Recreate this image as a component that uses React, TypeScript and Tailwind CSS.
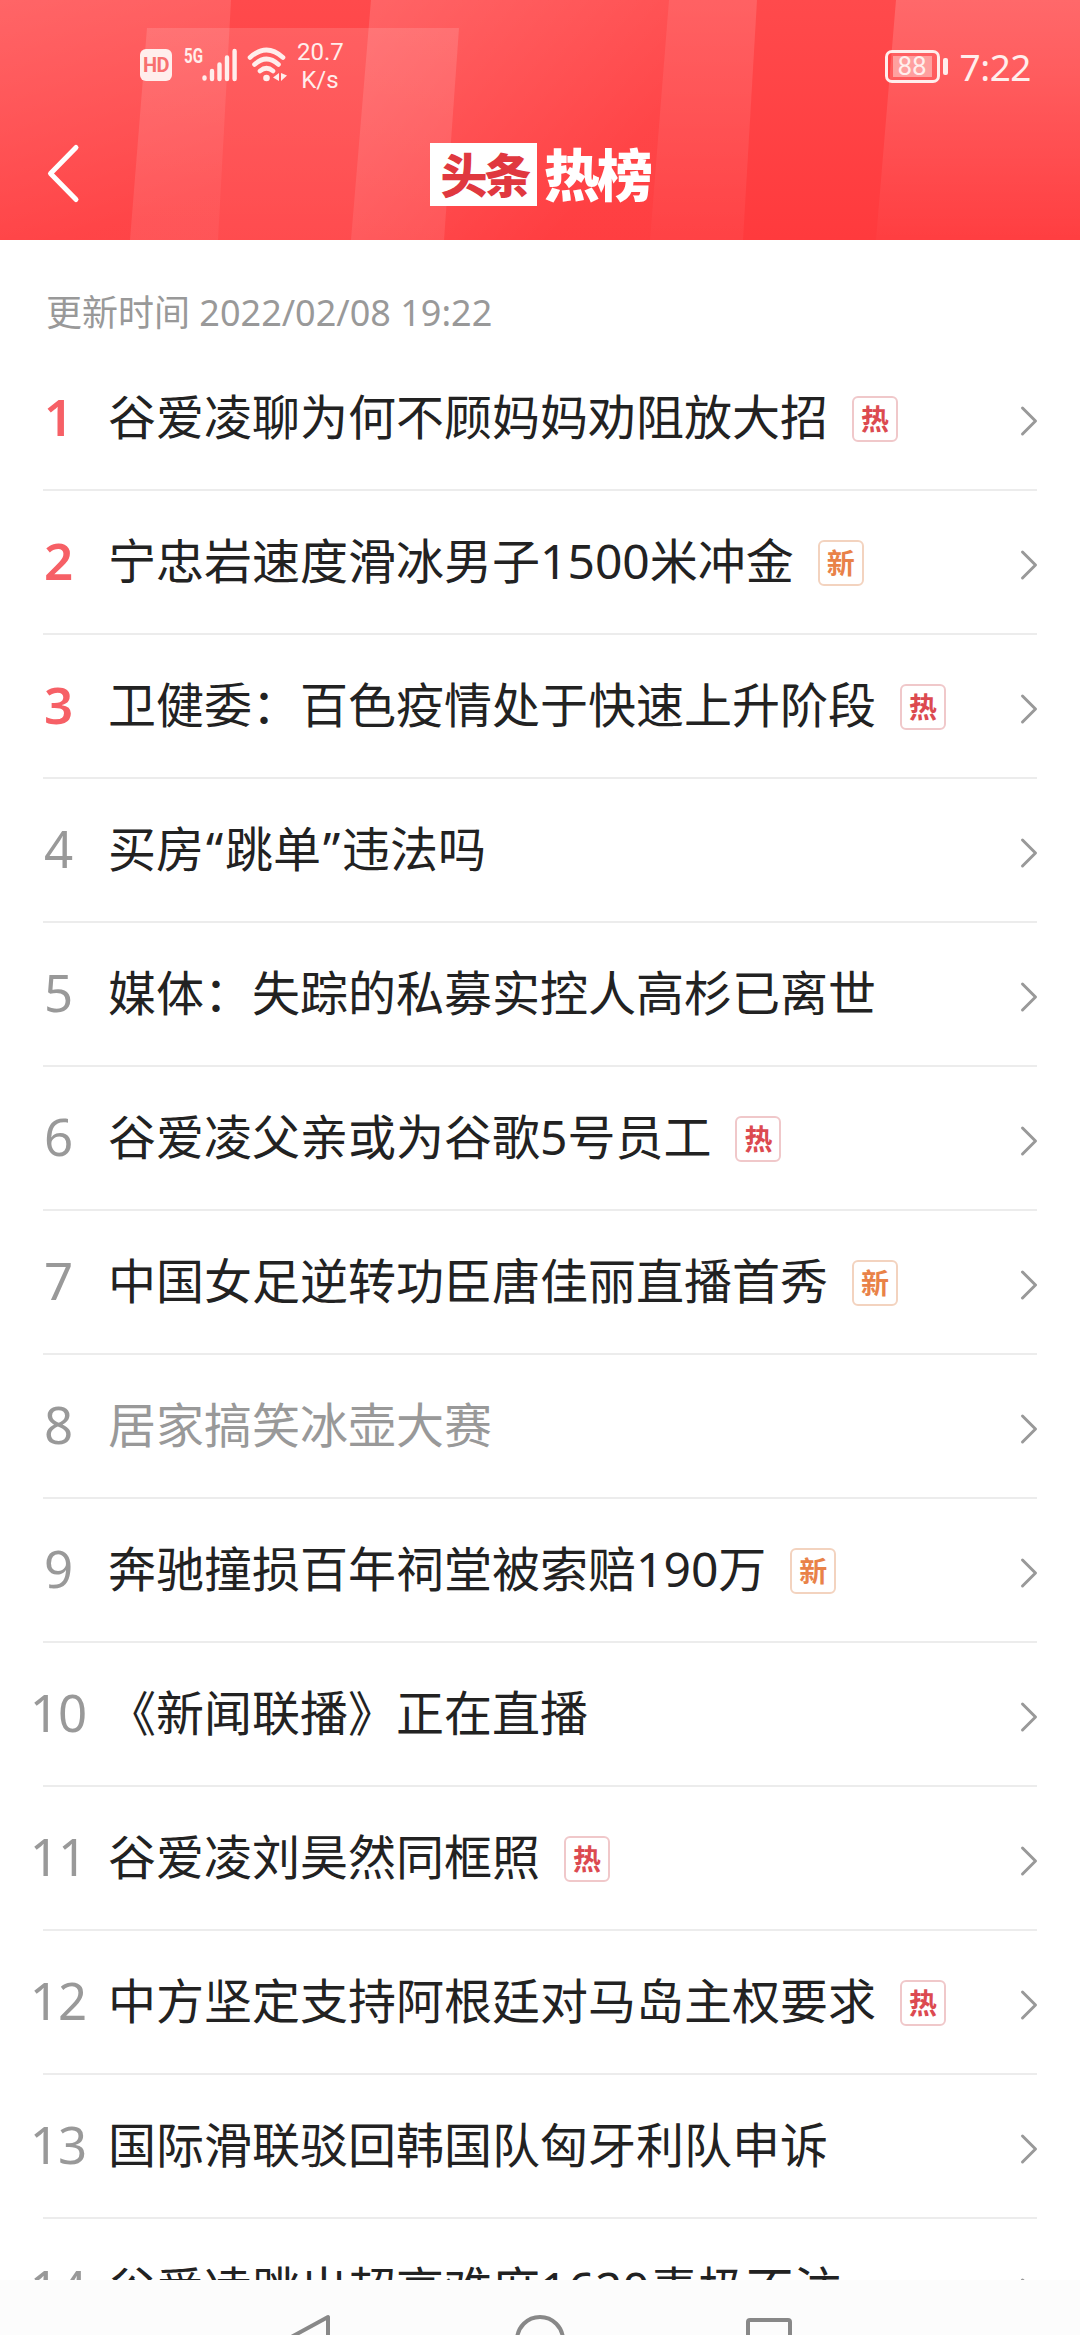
import React from 'react';

type Tag = 'hot' | 'new';

interface HotItem {
  title: string;
  tag?: Tag;
  visited?: boolean;
}

const items: HotItem[] = [
  { title: '谷爱凌聊为何不顾妈妈劝阻放大招', tag: 'hot' },
  { title: '宁忠岩速度滑冰男子1500米冲金', tag: 'new' },
  { title: '卫健委：百色疫情处于快速上升阶段', tag: 'hot' },
  { title: '买房“跳单”违法吗' },
  { title: '媒体：失踪的私募实控人高杉已离世' },
  { title: '谷爱凌父亲或为谷歌5号员工', tag: 'hot' },
  { title: '中国女足逆转功臣唐佳丽直播首秀', tag: 'new' },
  { title: '居家搞笑冰壶大赛', visited: true },
  { title: '奔驰撞损百年祠堂被索赔190万', tag: 'new' },
  { title: '《新闻联播》正在直播' },
  { title: '谷爱凌刘昊然同框照', tag: 'hot' },
  { title: '中方坚定支持阿根廷对马岛主权要求', tag: 'hot' },
  { title: '国际滑联驳回韩国队匈牙利队申诉' },
  { title: '谷爱凌跳出超高难度1620责极不注' },
];

const HeaderBackground = () => (
  <svg className="absolute inset-0 h-full w-full" viewBox="0 0 1080 240" preserveAspectRatio="none">
    <defs>
      <linearGradient id="base" x1="0" y1="0" x2="0" y2="1">
        <stop offset="0" stopColor="#ff4a4c" />
        <stop offset="1" stopColor="#ff3a3d" />
      </linearGradient>
      <linearGradient id="left" x1="0" y1="0" x2="0.3" y2="1">
        <stop offset="0" stopColor="#fff" stopOpacity="0.15" />
        <stop offset="1" stopColor="#fff" stopOpacity="0.05" />
      </linearGradient>
      <linearGradient id="fade" x1="0" y1="0" x2="0.9" y2="0.6">
        <stop offset="0" stopColor="#fff" stopOpacity="0.15" />
        <stop offset="1" stopColor="#fff" stopOpacity="0.02" />
      </linearGradient>
      <linearGradient id="strip" x1="0" y1="0" x2="0" y2="1">
        <stop offset="0" stopColor="#fff" stopOpacity="0.13" />
        <stop offset="1" stopColor="#fff" stopOpacity="0.04" />
      </linearGradient>
      <linearGradient id="edge" x1="0" y1="0" x2="0" y2="1">
        <stop offset="0" stopColor="#fff" stopOpacity="0.17" />
        <stop offset="1" stopColor="#fff" stopOpacity="0.02" />
      </linearGradient>
      <linearGradient id="panel" x1="0" y1="0" x2="0" y2="1">
        <stop offset="0" stopColor="#fff" stopOpacity="0.13" />
        <stop offset="1" stopColor="#fff" stopOpacity="0.09" />
      </linearGradient>
    </defs>
    <rect width="1080" height="240" fill="url(#base)" />
    <polygon points="0,0 231,0 218,240 0,240" fill="url(#left)" />
    <polygon points="371,0 669,0 650,240 351,240" fill="url(#fade)" />
    <polygon points="147,28 459,28 444,240 130,240" fill="url(#panel)" />
    <polygon points="669,0 757,0 743,240 650,240" fill="url(#strip)" />
    <polygon points="896,0 1080,0 1080,240 876,240" fill="url(#edge)" />
  </svg>
);

const StatusBar = () => (
  <div className="relative flex h-[130px] items-start pl-[140px] pr-[49px] text-[#ffeeec]">
    <div className="mt-[49px] flex h-8 w-8 items-center justify-center rounded-[6px] bg-[#ffeeec] font-['Roboto','Noto_Sans_CJK_SC',sans-serif] text-[20px] font-bold leading-none tracking-[-0.5px] text-[#f8706f]">
      HD
    </div>
    <span className="ml-[12px] mt-[46px] w-[18px] origin-left scale-x-[0.72] font-['Roboto',sans-serif] text-[21px] font-bold leading-[20px]">
      5G
    </span>
    <svg className="mt-[48px] h-[34px] w-[36px]" viewBox="0 0 36 34" stroke="currentColor" strokeWidth="4.4" strokeLinecap="round">
      <path d="M2.5 29.5v1M10 23v8M17.5 16.5v14.5M25 9.5v21.5M32.6 3v28" />
    </svg>
    <svg className="ml-[9px] mt-[47px] h-[35px] w-[41px]" viewBox="0 0 41 35" fill="none" stroke="currentColor" strokeWidth="4.6" strokeLinecap="round">
      <path d="M3 10.5Q19.5 -4.5 36 10.5M7.5 17.5Q19.5 6.5 31.5 17.5M13 24Q19.5 18.5 26 24" />
      <circle cx="19.5" cy="31" r="3.3" fill="currentColor" stroke="none" />
      <path d="M32 26v8l-6-3.5zM34 26v8l6-5.5z" fill="currentColor" stroke="none" />
    </svg>
    <div className="ml-[9px] mt-[38px] w-[46px] text-center font-['Roboto',sans-serif] text-[24px] leading-[28px]">
      20.7
      <br />
      K/s
    </div>
    <div className="ml-auto mt-[49px] flex items-center">
      <div className="flex h-[33px] w-[55px] items-center justify-center rounded-[7px] border-[3px] border-[#ffeeec]">
        <span className="flex h-[21px] w-[39px] items-center justify-center bg-[#ffa09f] font-['Roboto',sans-serif] text-[26px] leading-none">88</span>
      </div>
      <span className="ml-[3px] h-[17px] w-[5px] rounded-[2px] bg-[#ffeeec]" />
      <span className="ml-[12px] mt-px font-['Noto_Sans',sans-serif] text-[37px] leading-[33px] tracking-[-0.5px]">7:22</span>
    </div>
  </div>
);

const Header = () => (
  <header className="relative h-[240px] shrink-0 overflow-hidden">
    <HeaderBackground />
    <StatusBar />
    <div className="relative flex items-start">
      <svg className="ml-[46px] mt-[13px] h-[62px] w-[36px]" viewBox="0 0 36 62" fill="none" stroke="#fff" strokeWidth="5" strokeLinecap="round" strokeLinejoin="round">
        <path d="M30 4.5L4.5 30.5L30 56.5" />
      </svg>
      <div className="ml-[348px] mt-[13px] flex items-center font-['Noto_Sans_CJK_SC',sans-serif] font-black">
        <div className="flex h-[63px] w-[107px] items-start justify-center bg-white text-[47px] leading-[60px] tracking-[-3px] text-[#e0383f]">
          <span className="ml-[2px]">头条</span>
        </div>
        <span className="ml-[7px] h-[63px] text-[56px] leading-[57px] tracking-[-3px] text-white">热榜</span>
      </div>
    </div>
  </header>
);

const TagBadge = ({ tag }: { tag: Tag }) => (
  <span
    className={`ml-[24px] mt-[2px] flex h-[46px] w-[46px] items-center justify-center rounded-[6px] border-2 font-['Noto_Sans_CJK_SC',sans-serif] text-[28px] font-bold leading-none ${
      tag === 'hot' ? 'border-[#f0c8ca] text-[#dc4a50]' : 'border-[#f3d3bf] text-[#e98248]'
    }`}
  >
    <span className="mt-[-3px]">{tag === 'hot' ? '热' : '新'}</span>
  </span>
);

// Curly quotes take a bit more room than the font gives them
const Title = ({ text }: { text: string }) => (
  <>
    {text.split(/([“”])/).map((part, i) =>
      part === '“' || part === '”' ? (
        <span key={i} className="inline-block w-[21px] text-center">
          {part}
        </span>
      ) : (
        part
      )
    )}
  </>
);

const HotRow = ({ item, rank }: { item: HotItem; rank: number }) => (
  <li className="flex h-[144px] shrink-0 items-center border-b-2 border-[#ececec]">
    <span
      className={`ml-[-15px] mt-[-4px] w-[60px] shrink-0 text-center text-[51px] leading-[72px] tracking-[-1px] ${
        rank <= 3 ? 'font-semibold text-[#f66066]' : 'text-[#999]'
      }`}
    >
      {rank}
    </span>
    <span className={`ml-[20px] mt-[-2px] whitespace-nowrap text-[48px] leading-[72px] ${item.visited ? 'text-[#999]' : 'text-[#222]'}`}>
      <Title text={item.title} />
    </span>
    {item.tag && <TagBadge tag={item.tag} />}
    <svg className="ml-auto mr-[-1px] mt-[5px] h-[32px] w-[20px] shrink-0" viewBox="0 0 20 32" fill="none" stroke="#999" strokeWidth="3" strokeLinecap="round" strokeLinejoin="round">
      <path d="M4.5 3L17.5 16L4.5 29" />
    </svg>
  </li>
);

const NavBar = () => (
  <nav className="h-[55px] shrink-0 overflow-hidden bg-[#fcfcfc]">
    <svg className="h-[55px] w-full" viewBox="0 0 1080 55" fill="none" stroke="#888" strokeWidth="4" strokeLinejoin="round">
      <path d="M328 37V85L284 61Z" />
      <circle cx="540" cy="60" r="23" />
      <rect x="748" y="40" width="42" height="42" rx="2" />
    </svg>
  </nav>
);

const App: React.FC = () => {
  return (
    <div className="flex h-[2335px] w-[1080px] flex-col overflow-hidden bg-white font-['Noto_Sans','Noto_Sans_CJK_SC',sans-serif]">
      <Header />
      <main className="flex min-h-0 flex-1 flex-col overflow-hidden">
        <p className="h-[107px] shrink-0 pl-[46px] pt-[46px] text-[36px] leading-[54px] text-[#999]">更新时间 2022/02/08 19:22</p>
        <ul className="flex flex-col px-[43px]">
          {items.map((item, i) => (
            <HotRow key={item.title} item={item} rank={i + 1} />
          ))}
        </ul>
      </main>
      <NavBar />
    </div>
  );
};

export default App;
